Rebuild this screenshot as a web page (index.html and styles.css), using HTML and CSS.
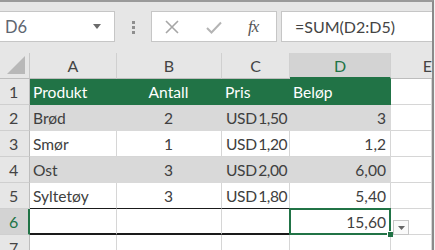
FILE: index.html
```html
<!DOCTYPE html>
<html lang="nb">
<head>
  <meta charset="UTF-8">
  <title>Regneark</title>
  <link rel="stylesheet" href="styles.css">
</head>
<body>
  <div class="window">
    <div class="toolbar">
      <div class="namebox">
        <span>D6</span>
        <svg class="nb-arrow" width="8" height="5" viewBox="0 0 8 5"><path d="M0 0h8L4 5z" fill="#6b6b6b"/></svg>
      </div>
      <div class="grip"><i></i><i></i><i></i></div>
      <div class="fbuttons">
        <svg class="icon-x" width="14" height="14" viewBox="0 0 14 14"><path d="M1 1L13 13M13 1L1 13" stroke="#a6a6a6" stroke-width="1.6" fill="none"/></svg>
        <svg class="icon-check" width="16" height="13" viewBox="0 0 16 13"><path d="M1 7l4.5 4.5L15 1.5" stroke="#b4b4b4" stroke-width="2" fill="none"/></svg>
        <span class="fx">fx</span>
      </div>
      <div class="formula">=SUM(D2:D5)</div>
    </div>

    <div class="sheet">
      <div class="corner">
        <svg width="20" height="20" viewBox="0 0 20 20"><path d="M19 1V19H1z" fill="#b8b8b8"/></svg>
      </div>
      <div class="colhdr">A</div>
      <div class="colhdr">B</div>
      <div class="colhdr">C</div>
      <div class="colhdr sel">D</div>
      <div class="colhdr last">E</div>

      <div class="rowhdr">1</div>
      <div class="cell head">Produkt</div>
      <div class="cell head center">Antall</div>
      <div class="cell head">Pris</div>
      <div class="cell head">Beløp</div>
      <div class="cell"></div>

      <div class="rowhdr">2</div>
      <div class="cell band">Brød</div>
      <div class="cell band center">2</div>
      <div class="cell band cur">USD 1,50</div>
      <div class="cell band right">3</div>
      <div class="cell"></div>

      <div class="rowhdr">3</div>
      <div class="cell">Smør</div>
      <div class="cell center">1</div>
      <div class="cell cur">USD 1,20</div>
      <div class="cell right">1,2</div>
      <div class="cell"></div>

      <div class="rowhdr">4</div>
      <div class="cell band">Ost</div>
      <div class="cell band center">3</div>
      <div class="cell band cur">USD 2,00</div>
      <div class="cell band right">6,00</div>
      <div class="cell"></div>

      <div class="rowhdr">5</div>
      <div class="cell above-total">Syltetøy</div>
      <div class="cell center above-total">3</div>
      <div class="cell above-total cur">USD 1,80</div>
      <div class="cell right above-total">5,40</div>
      <div class="cell"></div>

      <div class="rowhdr sel">6</div>
      <div class="cell total"></div>
      <div class="cell total"></div>
      <div class="cell total"></div>
      <div class="cell total right active">15,60<span class="handle"></span></div>
      <div class="cell qa-cell">
        <span class="quick">
          <svg width="7" height="4" viewBox="0 0 7 4"><path d="M0 0h7L3.5 4z" fill="#666"/></svg>
        </span>
      </div>

      <div class="rowhdr">7</div>
      <div class="cell"></div>
      <div class="cell"></div>
      <div class="cell"></div>
      <div class="cell"></div>
      <div class="cell"></div>
    </div>
  </div>
</body>
</html>
```

FILE: styles.css
```css
html, body {
  margin: 0;
  padding: 0;
  background: #f2f2f2;
  font-family: 'Lato', 'Open Sans', sans-serif;
}

.window {
  width: 434px;
  height: 250px;
  border-top: 2px solid #9a9a9a;
  border-right: 2px solid #8a8a8a;
  box-sizing: border-box;
  overflow: hidden;
  background: #fff;
}

/* formula bar */
.toolbar {
  height: 51px;
  background: #e6e6e6;
  display: flex;
  align-items: flex-start;
  padding-top: 9px;
  box-sizing: border-box;
}

.namebox {
  width: 115px;
  height: 31px;
  background: #fff;
  border: 1px solid #c6c6c6;
  border-left: none;
  box-sizing: border-box;
  display: flex;
  align-items: center;
  justify-content: space-between;
  padding: 0 13px 0 5px;
  font-size: 16.5px;
  color: #5f6670;
}

.grip {
  display: flex;
  flex-direction: column;
  gap: 2px;
  margin: 10px 0 0 17px;
}

.grip i {
  width: 3px;
  height: 3px;
  background: #8e8e8e;
}

.fbuttons {
  width: 126px;
  height: 31px;
  margin-left: 16px;
  background: #fff;
  border: 1px solid #c6c6c6;
  box-sizing: border-box;
  display: flex;
  align-items: center;
}

.icon-x {
  margin-left: 13px;
}

.icon-check {
  margin-left: 27px;
  margin-top: 2px;
}

.fx {
  margin-left: 26px;
  font-family: 'Liberation Serif', serif;
  font-style: italic;
  font-size: 17px;
  color: #555;
  letter-spacing: -1px;
}

.formula {
  flex: 1;
  height: 31px;
  margin-left: 4px;
  background: #fff;
  border: 1px solid #c6c6c6;
  border-right: none;
  box-sizing: border-box;
  padding-left: 13px;
  display: flex;
  align-items: center;
  font-size: 16px;
  color: #444;
}

/* grid */
.sheet {
  display: grid;
  grid-template-columns: 30px 87px 105px 68px 101px 1fr;
  grid-auto-rows: 26px;
  font-size: 15.6px;
}

.corner {
  background: #e6e6e6;
  border-right: 1px solid #c8c8c8;
  border-bottom: 1px solid #bdbdbd;
  display: flex;
  align-items: flex-end;
  justify-content: flex-end;
  padding: 0 3px 3px 0;
}

.colhdr {
  background: #e6e6e6;
  border-right: 1px solid #d0d0d0;
  border-bottom: 1px solid #bdbdbd;
  display: flex;
  align-items: center;
  justify-content: center;
  color: #444;
  font-size: 16px;
}

.colhdr.sel {
  background: #d3d3d3;
  color: #217346;
  border-bottom: 2px solid #217346;
}

.colhdr.last {
  justify-content: flex-end;
  border-right: none;
  overflow: hidden;
}

.rowhdr {
  background: #e6e6e6;
  border-right: 1px solid #bdbdbd;
  border-bottom: 1px solid #cfcfcf;
  display: flex;
  align-items: center;
  padding-left: 9px;
  color: #444;
  font-size: 16px;
}

.rowhdr.sel {
  background: #d3d3d3;
  color: #217346;
  border-right: 2px solid #217346;
}

.cell {
  background: #fff;
  border-right: 1px solid #d6d6d6;
  border-bottom: 1px solid #d6d6d6;
  display: flex;
  align-items: center;
  padding: 1px 4px 0 3px;
  color: #404040;
  white-space: nowrap;
}

.cell.center { justify-content: center; }
.cell.right { justify-content: flex-end; }

.cell.cur {
  letter-spacing: -0.4px;
  word-spacing: -2px;
  padding-left: 4px;
  padding-right: 0;
}

.cell.head {
  background: #217346;
  border-color: #217346;
  color: #fff;
}

.cell.band {
  background: #d9d9d9;
  border-color: #d9d9d9;
}

.cell.above-total {
  border-bottom-color: #1a1a1a;
}

.cell.total {
  border-bottom: 2px solid #1a1a1a;
}

.cell.active {
  position: relative;
  border-color: transparent;
  border-bottom: 1px solid transparent;
}

.cell.active::after {
  content: "";
  position: absolute;
  left: -1px;
  top: -1px;
  right: -1px;
  bottom: -1px;
  border: 2px solid #217346;
}

.handle {
  position: absolute;
  right: -3px;
  bottom: -3px;
  width: 5px;
  height: 5px;
  background: #217346;
  border-left: 1px solid #fff;
  border-top: 1px solid #fff;
  z-index: 1;
}

.qa-cell {
  position: relative;
}

.quick {
  position: absolute;
  left: 2px;
  top: 11px;
  width: 16px;
  height: 15px;
  box-sizing: border-box;
  border: 1px solid #c6c6c6;
  background: #fafafa;
  display: flex;
  align-items: center;
  justify-content: center;
  z-index: 2;
}
```
